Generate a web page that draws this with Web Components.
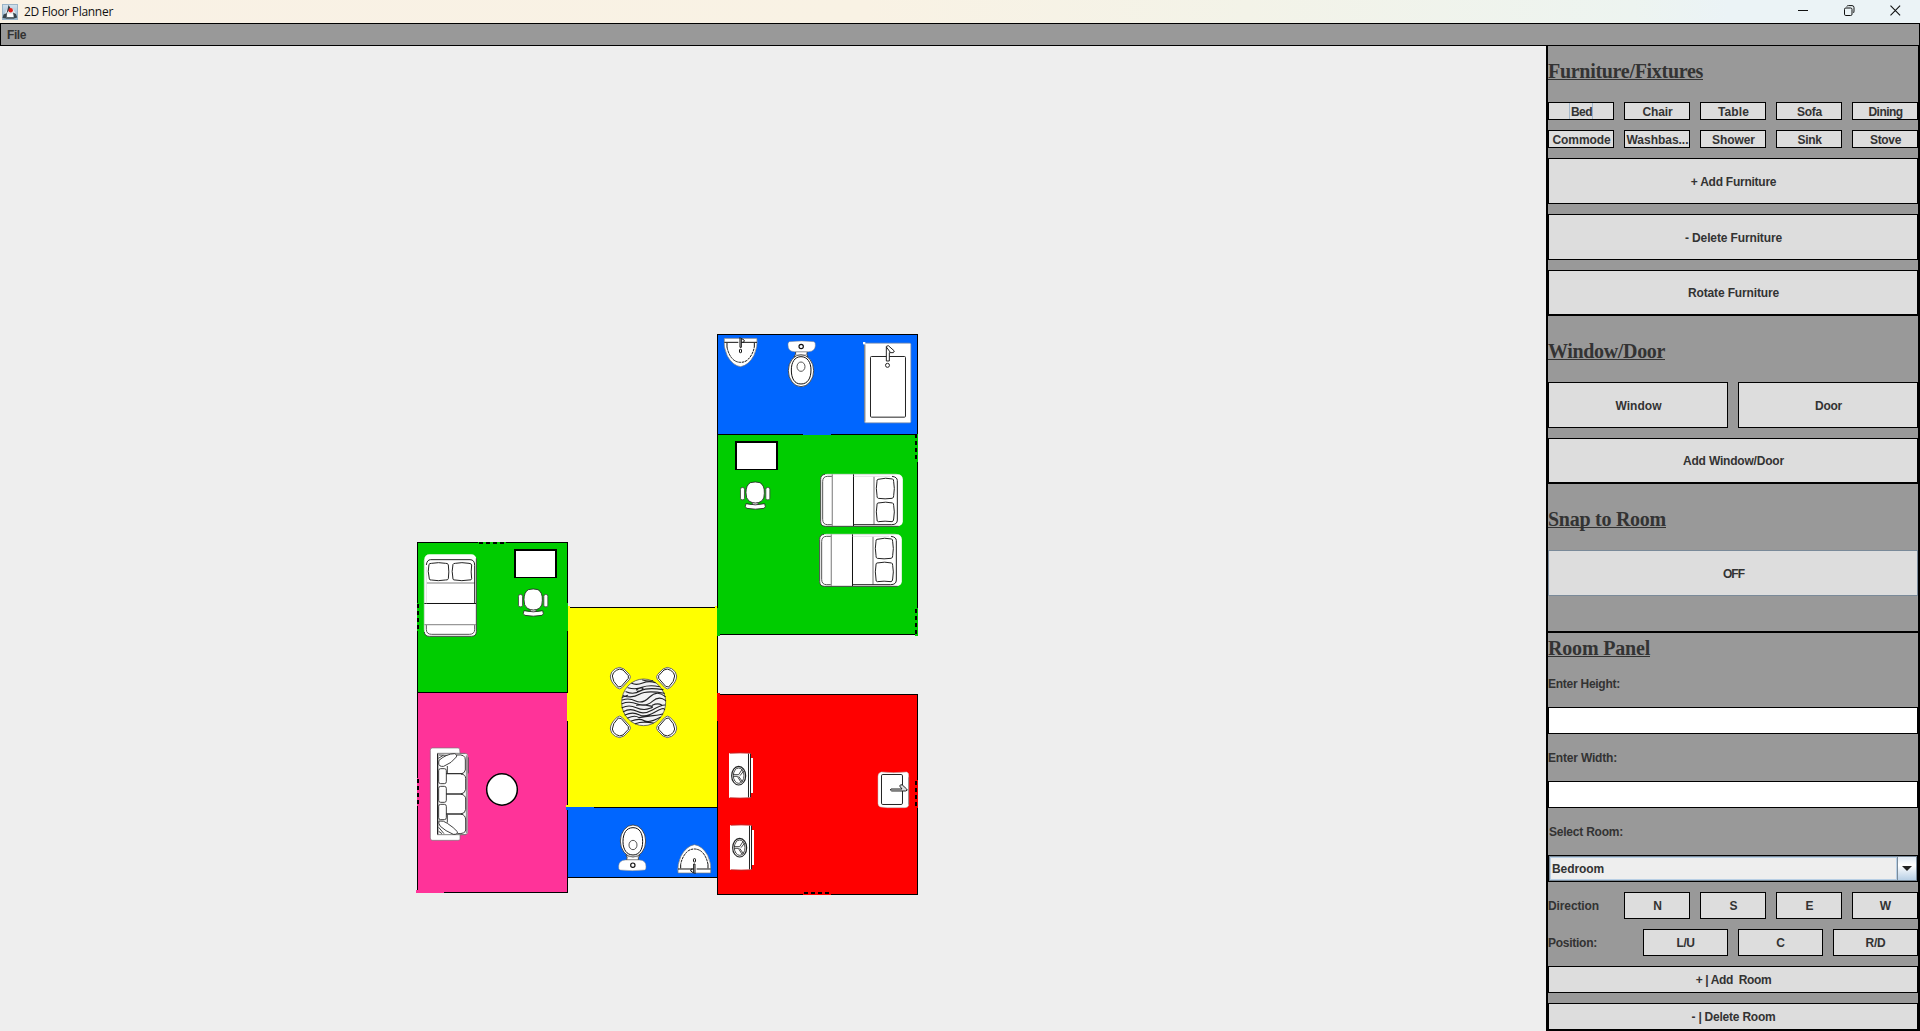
<!DOCTYPE html>
<html lang="en">
<head>
<meta charset="utf-8">
<title>2D Floor Planner</title>
<style>
html,body{margin:0;height:100%;overflow:hidden;background:#eee}
body{font:bold 12px "Liberation Sans",Arial,sans-serif;color:#333}
</style>
</head>
<body>
<floor-planner></floor-planner>

<template id="t-floor-planner">
<style>
:host{display:grid;grid-template-rows:23px 23px 985px;width:1920px;height:1031px}
.main{display:grid;grid-template-columns:1546px 374px}
</style>
<title-bar><fit-text w="89">2D Floor Planner</fit-text></title-bar>
<menu-bar><fit-text w="19">File</fit-text></menu-bar>
<div class="main"><plan-canvas></plan-canvas><side-panel></side-panel></div>
</template>

<template id="t-title-bar">
<style>
:host{display:flex;align-items:center;box-sizing:border-box;height:23px;background:linear-gradient(90deg,#f9f1e5 0,#f9f2e4 45%,#f3f3e8 65%,#edf4f0 85%,#ebf3f6 90%,#ebf3f6 100%);color:#111;font:12px "Open Sans","Noto Sans",sans-serif}
.icon{margin-left:2px;width:16px;height:16px}
.t{margin-left:6px;flex:1;line-height:22px;margin-bottom:-1px}
.btns{display:flex;gap:35px;margin-right:19px;margin-top:-3px}
.btns svg{width:11px;height:11px;display:block}
</style>
<svg class="icon" viewBox="0 0 16 16"><defs><linearGradient id="g" x1="0" y1="0" x2="0" y2="1"><stop offset="0" stop-color="#d3e1ec"/><stop offset="1" stop-color="#8fb3cf"/></linearGradient></defs><rect x=".5" y=".5" width="15" height="15" fill="url(#g)" stroke="#9ab4c8"/><path d="M6.500 2L11 5 13.500 9 12 14 4 14.500 3 9Z" fill="#e6eaec"/><path d="M6.500 1L8.500 4 6.500 7 4.500 9.500Z M11 8.500l3 1.500 1.200 3.500-3 1zM5 9l-3.500 1.500-1 3.500 4 .5z" fill="#38444b"/><path d="M4 12.500h8v2.500H4z" fill="#5b6970"/><path d="M5.500 10h5l1 3H5z" fill="#fff"/><circle cx="8.700" cy="6.300" r="2.200" fill="#e01f1c"/></svg>
<div class="t"><slot></slot></div>
<div class="btns">
<svg viewBox="0 0 11 11"><path d="M0 5.500h10" stroke="#111"/></svg>
<svg viewBox="0 0 11 11" fill="none" stroke="#111"><rect x=".5" y="3" width="7.500" height="7.500" rx="1.300"/><path d="M2.800 1.500Q3 .6 4.500 .6H8Q10 .6 10 2.600V6Q10 7.600 9.200 8"/></svg>
<svg viewBox="0 0 11 11"><path d="M.5 .7l9.600 9.600M10.100 .7L.5 10.300" stroke="#111" stroke-width="1.100"/></svg>
</div>
</template>

<template id="t-menu-bar">
<style>:host{display:flex;align-items:center;box-sizing:border-box;border:1px solid #000;background:#999;padding-left:6px;height:23px}</style>
<slot></slot>
</template>

<template id="t-swing-button">
<style>
:host{display:flex;align-items:center;justify-content:center;box-sizing:border-box;border:1px solid #000;background:#ddd;min-width:0;overflow:hidden;white-space:pre;line-height:14px}
:host([last]){border-bottom-width:2px}
:host([soft]){border-color:#7a8a99}
:host([focused]) span{padding:3px 0 1px 1px;border:1px solid #a3b8cc}
span{display:block;padding:1px 0 0 var(--dx,1px)}
</style><span><slot></slot></span>
</template>

<template id="t-panel-heading">
<style>
:host{display:flex;align-items:center;font:bold 20px/22px "Liberation Serif","Times New Roman",serif}
span{border-bottom:1px solid #333;height:19px;margin-top:2px;line-height:22px;white-space:nowrap}
</style><span><slot></slot></span>
</template>

<template id="t-panel-label">
<style>:host{display:flex;align-items:center;line-height:14px}:host([indent]){padding-left:1px}</style><slot></slot>
</template>

<template id="t-text-box">
<style>:host{display:block;box-sizing:border-box;background:#fff;border:1px solid #000}</style>
</template>

<template id="t-combo-box">
<style>
:host{display:flex;box-sizing:border-box;border:1px solid #000;background:#eee}
.v{flex:1;display:flex;align-items:center;border:1px solid #7a8a99;box-shadow:inset 0 0 0 1px #b8cfe5;padding-left:2px}
.a{width:18px;border:1px solid #7a8a99;border-left:0;background:linear-gradient(#dfeaf5 0,#fff 35%,#b8cfe5 100%);display:flex;align-items:center;justify-content:center}
svg{width:10px;height:5px;display:block}
</style>
<div class="v"><slot></slot></div><div class="a"><svg viewBox="0 0 10 5"><path d="M0 0h10L5 5z" fill="#222"/></svg></div>
</template>

<template id="t-side-panel">
<style>
:host{display:grid;grid-template-rows:270px 168px 149px 398px;box-sizing:border-box;border:solid #000;border-width:0 2px;background:#999;height:985px}
section{display:grid;gap:10px;grid-auto-rows:46px}
.five{display:grid;grid-template-columns:repeat(5,66px);gap:10px}
.s{grid-auto-rows:18px}
.two{display:grid;grid-template-columns:180px 180px;gap:10px}
.four{display:grid;grid-template-columns:repeat(4,85px);gap:10px;--dx:0px}
.win,.snap{padding-top:10px}
.snap{border-bottom:2px solid #000}
.room{grid-auto-rows:27px}
.room>panel-heading{margin-top:-1px}
.room>*:last-child{height:28px}
</style>
<section>
<panel-heading><fit-text w="155">Furniture/Fixtures</fit-text></panel-heading>
<div class="five s">
<swing-button focused><fit-text w="21">Bed</fit-text></swing-button>
<swing-button><fit-text w="30">Chair</fit-text></swing-button>
<swing-button><fit-text w="31">Table</fit-text></swing-button>
<swing-button><fit-text w="25">Sofa</fit-text></swing-button>
<swing-button><fit-text w="34">Dining</fit-text></swing-button>
<swing-button><fit-text w="58">Commode</fit-text></swing-button>
<swing-button><fit-text w="62">Washbas...</fit-text></swing-button>
<swing-button><fit-text w="43">Shower</fit-text></swing-button>
<swing-button><fit-text w="24">Sink</fit-text></swing-button>
<swing-button><fit-text w="31">Stove</fit-text></swing-button>
</div>
<swing-button><fit-text w="86">+ Add Furniture</fit-text></swing-button>
<swing-button><fit-text w="97">- Delete Furniture</fit-text></swing-button>
<swing-button last><fit-text w="91">Rotate Furniture</fit-text></swing-button>
</section>
<section class="win">
<panel-heading><fit-text w="117">Window/Door</fit-text></panel-heading>
<div class="two"><swing-button><fit-text w="46">Window</fit-text></swing-button><swing-button><fit-text w="27">Door</fit-text></swing-button></div>
<swing-button last><fit-text w="101">Add Window/Door</fit-text></swing-button>
</section>
<section class="snap">
<panel-heading><fit-text w="118">Snap to Room</fit-text></panel-heading>
<swing-button soft><fit-text w="21">OFF</fit-text></swing-button>
</section>
<section class="room">
<panel-heading><fit-text w="102">Room Panel</fit-text></panel-heading>
<panel-label><fit-text w="72">Enter Height:</fit-text></panel-label>
<text-box></text-box>
<panel-label><fit-text w="69">Enter Width:</fit-text></panel-label>
<text-box></text-box>
<panel-label indent><fit-text w="74">Select Room:</fit-text></panel-label>
<combo-box><fit-text w="52">Bedroom</fit-text></combo-box>
<div class="five"><panel-label><fit-text w="51">Direction</fit-text></panel-label><swing-button>N</swing-button><swing-button>S</swing-button><swing-button>E</swing-button><swing-button>W</swing-button></div>
<div class="four"><panel-label><fit-text w="49">Position:</fit-text></panel-label><swing-button><fit-text w="18">L/U</fit-text></swing-button><swing-button>C</swing-button><swing-button><fit-text w="20">R/D</fit-text></swing-button></div>
<swing-button><fit-text w="76">+ | Add  Room</fit-text></swing-button>
<swing-button last><fit-text w="84">- | Delete Room</fit-text></swing-button>
</section>
</template>

<template id="t-plan-canvas">
<style>:host{display:block;background:#eee;height:985px}svg{display:block}</style>
<svg width="1546" height="985" viewBox="0 46 1546 985">
<defs>
<g id="bed" fill="none" stroke="#222" stroke-width="3">
<rect x="331.500" y="133" width="247" height="156" rx="15" fill="#fff" stroke="none"/>
<path d="M345 133Q332 134 332 148V274Q332 289 346 289H566" stroke="#444"/>
<path d="M350 133H560" stroke="#ddd"/>
<path d="M367 139H353Q338 139 338 155V268Q338 284 353 284H367" stroke="#555"/>
<path d="M367 133V288" stroke="#999" stroke-width="4"/>
<path d="M430.500 133V288" stroke="#111"/>
<path d="M492 139V284" stroke="#aaa" stroke-width="5"/>
<path d="M431 284H545Q562 284 562 270V152Q562 141 546 139" />
<path d="M431 139H540" stroke="#e2e2e2"/>
<path d="M504 148Q528 142 548 147Q551 148 551 155Q555 175 551 197Q552 204 546 205Q525 208 505 205Q500 204 501 196Q497 175 501 154Q500 149 504 148ZM504 219Q528 214 548 219Q551 220 551 226Q555 245 551 267Q551 274 546 275Q525 272 505 275Q500 275 501 267Q497 245 501 225Q500 220 504 219Z"/>
</g>
<g id="toilet" fill="#fff" stroke="#333" stroke-width="2.500">
<path d="M257 80Q259 88 252 95H294Q288 88 292 80Z"/>
<path d="M238 50Q275 46 312 50Q317 52 316 62Q315 79 296 80H254Q234 80 234 60Q233 52 238 50Z" stroke="#888" stroke-width="1.500"/>
<ellipse cx="273" cy="137" rx="38" ry="48"/>
<path d="M273 95C292 95 303 112 303 135C303 160 293 177 273 177C253 177 244 160 244 135C244 112 254 95 273 95Z" stroke="#111" stroke-width="3"/>
<ellipse cx="273" cy="125" rx="12" ry="14"/><circle cx="273.500" cy="64.500" r="6.500" stroke="#111" stroke-width="3.500"/>
<path d="M256 90H290" stroke="#888"/>
</g>
<g id="basin" fill="none" stroke="#111" stroke-width="3">
<path d="M43 40H141Q144 66 132 91Q116 121 92 125Q68 122 52 93Q39 66 43 40Z" fill="#fff" stroke="#777" stroke-width="2"/>
<path d="M43 52H85M97 52H141M51 54V66M133 54V66"/><path d="M51 66Q56 90 68 102Q78 112 92 112Q108 112 118 99Q129 86 133 66" stroke-dasharray="8 2"/>
<path d="M90 37V67H94V40L103 46 101 52H94" stroke-width="3"/><rect x="88.500" y="73" width="6" height="10" rx="2"/>
</g>
<g id="chair" fill="#fff" stroke="#444" stroke-width="2.500">
<rect x="91.500" y="172.500" width="12" height="37" rx="5"/><rect x="167.500" y="172.500" width="12" height="37" rx="5"/>
<path d="M127 218h17v8h-17z"/><path d="M121 158Q136 154 150 158Q164 166 163 190Q164 206 154 214Q136 224 118 214Q107 206 108 187Q108 166 121 158Z" stroke="#222"/>
<path d="M108 221Q136 228 164 221Q169 232 162 235Q136 240 110 235Q103 231 108 221Z" stroke="#222"/>
</g>
<g id="stove" fill="none" stroke="#222" stroke-width="3">
<path d="M57 190H121V204H129V309H121V323H57Z" fill="#fff" stroke="none"/>
<path d="M60 190Q90 186 121 190M60 323Q90 327 121 323" stroke="#a33" stroke-width="2"/>
<path d="M115.500 191V322M121.500 191V322"/>
<ellipse cx="86" cy="257" rx="21" ry="28" stroke-width="3.500"/><ellipse cx="86" cy="257" rx="16" ry="23" stroke-width="2.500"/>
<path d="M70 254H86L97 237M86 259L98 276M71 259H82L94 278M90 257L101 243" stroke-width="2.500"/>
</g>
<g id="seat" stroke-linejoin="round">
<path d="M166 206Q179 198 192 207L208 223Q214 230 209 238L187 262Q179 271 171 263Q151 246 151 228Q152 214 166 206Z" fill="#fff" stroke="#666" stroke-width="3"/>
<path d="M169 211Q179 204 189 210L205 227 205 235 184 259 175 261Q157 244 157 228Q158 217 169 211Z" fill="#fff" stroke="#222" stroke-width="3"/>
</g>
</defs>

<g id="rooms" stroke="#000" shape-rendering="crispEdges">
<rect x="417.500" y="542.500" width="150" height="150" fill="#00cc00"/>
<rect x="417.500" y="692.500" width="150" height="200" fill="#ff3399"/>
<rect x="567.500" y="607.500" width="150" height="200" fill="#ffff00"/>
<rect x="567.500" y="807.500" width="150" height="70" fill="#0066ff"/>
<rect x="717.500" y="334.500" width="200" height="100" fill="#0066ff"/>
<rect x="717.500" y="434.500" width="200" height="200" fill="#00cc00"/>
<rect x="717.500" y="694.500" width="200" height="200" fill="#ff0000"/>
<path d="M567.500 607V808M717.500 607V878" fill="none"/>
</g>
<g id="openings" shape-rendering="crispEdges">
<path fill="#0066ff" d="M803 432h28v3h-28zM566 807h28v3h-28z"/>
<path fill="#ff3399" d="M416 890h28v3h-28zM417 778h2v28h-2z"/>
<path fill="#ffff00" d="M568 606h2v28h-2zM715 606h2v28h-2zM567 693h3v28h-3zM715 693h2v28h-2zM566 805h28v2h-28z"/>
<path fill="#00cc00" d="M478 542h28v2h-28zM417 603h2v28h-2zM565 603h3v28h-3zM717 608h3v28h-3zM915 434h3v28h-3zM915 608h3v28h-3z"/>
<path fill="#ff0000" d="M717 693h3v28h-3zM915 780h3v28h-3zM803 892h28v3h-28z"/>
<g fill="none" stroke="#000" stroke-width="2" stroke-dasharray="4 3">
<path d="M479 543H504M418 604V629M418 779V804M916 434V460M916 609V634M916 781V806M804 893H829"/>
</g>
</g>

<g transform="translate(710 325) scale(.33333)">
<use href="#basin"/><use href="#toilet"/>
<g fill="none" stroke="#222" stroke-width="3">
<rect x="463.500" y="54.500" width="139" height="239" rx="4" fill="#fff" stroke="#999" stroke-width="2"/><path d="M465 58V290" stroke="#555" stroke-width="2"/><rect x="459" y="51" width="7" height="7" fill="#fff" stroke="none"/>
<rect x="481.500" y="94.500" width="105" height="182" rx="3"/>
<path d="M529 108V64L535 62L553 78L550 83H538V108Z" fill="#fff"/><path d="M529 66L541 82" /><circle cx="532.500" cy="121" r="6" fill="#fff"/>
</g></g>

<g transform="translate(710 430) scale(.33333)">
<path d="M75 33H204V120H75Z"/><path d="M81 39H198V117H81Z" fill="#fff"/>
<use href="#chair"/><use href="#bed"/><use href="#bed" x="-3" y="180"/>
</g>

<g transform="translate(410 535) scale(.33333)">
<g transform="translate(-90 636) rotate(-90)"><use href="#bed"/></g>
<path d="M312 42H441V129H312Z"/><path d="M318 48H435V126H318Z" fill="#fff"/>
<use href="#chair" x="234" y="6"/>
</g>

<g transform="translate(410 690) scale(.33333)">
<path d="M66 174H146Q150 176 150 191H168Q173 191 173 196V430Q172 434 150 434V448Q149 451 144 451H66Q61 450 61 444V181Q61 175 66 174Z" fill="#fff" stroke="#777" stroke-width="2"/>
<g fill="none" stroke="#333" stroke-width="2.800">
<path d="M83 190V434" stroke="#222" stroke-width="4"/>
<path d="M82 190H166M82 434H168M169 196V430" stroke="#777"/><path d="M175 202V250" stroke="#555"/>
<path d="M108 251H158M108 312H158M108 372H158" stroke-width="4"/>
<path d="M140 195Q167 192 166 210V240Q164 250 153 252Q167 253 167 266V298Q165 310 153 312Q167 316 167 327V358Q166 370 153 372Q167 375 167 390V420Q166 432 142 431"/>
<rect x="86" y="236" width="23" height="45" rx="6"/><rect x="86" y="289" width="23" height="48" rx="6"/><rect x="86" y="343" width="23" height="46" rx="6"/>
<path d="M87 211Q110 191 134 191Q144 194 139 201Q126 219 101 229Q86 231 86 219Z"/>
<path d="M87 393Q101 391 112 400Q132 413 142 425Q144 434 130 433Q106 423 91 409Q84 399 87 393Z"/>
<path d="M87 195L112 196M85 205L100 196M112 228V251M112 374V398M86 412L102 431M86 424L96 431"/>
</g>
<ellipse cx="276" cy="298.500" rx="46" ry="47" fill="#fff" stroke="#000" stroke-width="4.500"/>
</g>

<g transform="translate(560 600) scale(.33333)">
<use href="#seat"/><use href="#seat" transform="translate(501 0) scale(-1 1)"/>
<use href="#seat" transform="translate(0 615) scale(1 -1)"/><use href="#seat" transform="translate(501 615) scale(-1 -1)"/>
<ellipse cx="251" cy="307" rx="66" ry="70" fill="#f2f2f2" stroke="#555" stroke-width="2.500"/>
<g fill="none" stroke="#222" stroke-width="3.300" stroke-linecap="round">
<path d="M215 250Q229 257 248 249T286 248M204 263Q225 270 246 262T299 260M198 275Q220 285 241 273T309 269M190 287Q217 296 238 283T313 280M187 300Q207 293 227 303T269 291T316 290M186 311Q208 302 232 312T277 304T317 302M186 323Q207 313 229 323T270 325Q287 320 265 317Q246 312 230 316M190 335Q211 323 231 334T277 330T315 315M195 345Q218 334 237 344T284 337T314 329M203 354Q225 344 237 353Q254 350 279 347T308 342M214 363Q237 354 253 362T301 352M226 371Q246 363 280 369M248 240Q264 245 278 242M229 270Q238 262 249 265Q248 272 232 274M187 292L203 286M277 316Q293 308 305 315"/>
</g>
<g transform="translate(492 860) rotate(180)"><use href="#toilet"/></g>
<g transform="translate(495 859) rotate(180)"><use href="#basin"/></g>
</g>

<g transform="translate(710 690) scale(.33333)">
<use href="#stove"/><use href="#stove" x="3" y="216"/>
<g fill="none" stroke="#222" stroke-width="3">
<path d="M514 246Q550 250 590 246Q597 248 596 258V346Q594 354 584 353H532L512 351Q504 349 504 340V260Q503 249 514 246Z" fill="#fff" stroke="#bbb" stroke-width="1.500"/>
<path d="M596 262V344" stroke="#777" stroke-width="2"/>
<rect x="514.500" y="253.500" width="63" height="90" rx="4"/>
<path d="M543 297H576L569 288Q571 282 577 285L590 297Q595 301 587 303H545Q538 300 543 297Z" fill="#ddd"/>
</g></g>
</svg>
</template>

<script>
const define = (name) => customElements.define(name, class extends HTMLElement {
  constructor() {
    super();
    this.attachShadow({mode: 'open'}).append(document.getElementById('t-' + name).content.cloneNode(true));
  }
});

// Text run whose tracking is adjusted so that its advance width equals the "w" attribute.
const ruler = document.createElement('canvas').getContext('2d');
class FitText extends HTMLElement {
  constructor() {
    super();
    this.attachShadow({mode: 'open'}).innerHTML = '<style>:host{display:inline-block;white-space:pre}</style><slot></slot>';
  }
  connectedCallback() {
    const s = getComputedStyle(this), text = this.textContent;
    ruler.font = `${s.fontWeight} ${s.fontSize} ${s.fontFamily}`;
    this.style.letterSpacing = (this.getAttribute('w') - ruler.measureText(text).width) / text.length + 'px';
  }
}
['title-bar', 'menu-bar', 'swing-button', 'panel-heading', 'panel-label', 'text-box', 'combo-box', 'side-panel', 'plan-canvas', 'floor-planner'].forEach(define);
customElements.define('fit-text', FitText);
</script>
</body>
</html>
